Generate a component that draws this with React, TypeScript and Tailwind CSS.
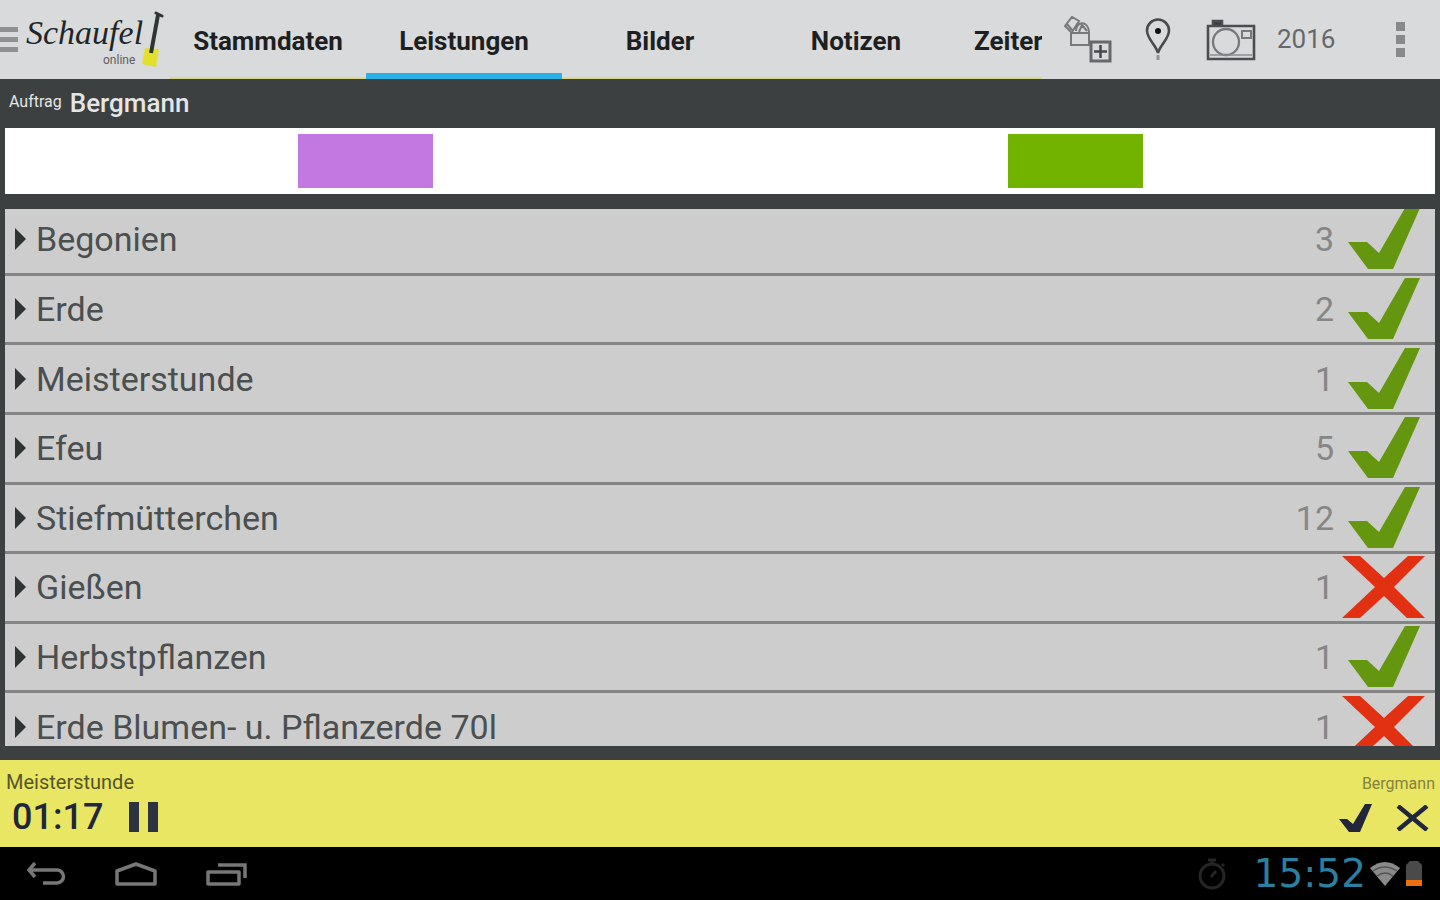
import React, { useState } from 'react';

type Service = {
  name: string;
  amount: number;
  done: boolean;
};

const tabs = ['Stammdaten', 'Leistungen', 'Bilder', 'Notizen', 'Zeiter'];

const services: Service[] = [
  { name: 'Begonien', amount: 3, done: true },
  { name: 'Erde', amount: 2, done: true },
  { name: 'Meisterstunde', amount: 1, done: true },
  { name: 'Efeu', amount: 5, done: true },
  { name: 'Stiefmütterchen', amount: 12, done: true },
  { name: 'Gießen', amount: 1, done: false },
  { name: 'Herbstpflanzen', amount: 1, done: true },
  { name: 'Erde Blumen- u. Pflanzerde 70l', amount: 1, done: false },
];

const Logo: React.FC = () => (
  <svg width="142" height="64" viewBox="0 0 142 64" role="img" aria-label="Schaufel online">
    <text x="4" y="36" fontFamily="Liberation Serif, serif" fontStyle="italic" fontSize="34" fill="#1f2626">
      Schaufel
    </text>
    <text x="81" y="56" fontFamily="Roboto, sans-serif" fontSize="12" fill="#5d6060">
      online
    </text>
    <path d="M123 40l14 1-3 18-14-3z" fill="#e2e02a" />
    <path d="M136 7l-7 38" stroke="#2d3535" strokeWidth="4" fill="none" />
    <path d="M134 5l6 3" stroke="#2d3535" strokeWidth="3" strokeLinecap="round" />
  </svg>
);

const MaterialIcon: React.FC = () => (
  <svg width="48" height="48" viewBox="0 0 48 48" fill="none" stroke="#77797b" strokeWidth="2">
    <path d="M7 17h18v12H7z" />
    <path d="M7 16L1 10l7-9 7 4-7 11M3 8l5 6M12 15c0-10 12-11 13 1M15 16l3-7 5 6" />
    <path d="M27 26h19v19H27z" stroke="#66696b" strokeWidth="3" />
    <path d="M36.500 29v13M30 35.500h13" stroke="#44484a" strokeWidth="2.500" />
  </svg>
);

const PinIcon: React.FC = () => (
  <svg width="26" height="44" viewBox="0 0 26 44" fill="none" stroke="#484b4d" strokeWidth="2.6">
    <path d="M13 35C11 27 2 21 2 12.500a11 11 0 0 1 22 0C24 21 15 27 13 35z" />
    <circle cx="13" cy="13" r="3" fill="#111" stroke="none" />
    <path d="M13 37v5" stroke="#929496" strokeWidth="3" />
  </svg>
);

const CameraIcon: React.FC = () => (
  <svg width="50" height="42" viewBox="0 0 50 42" fill="none" stroke="#4b4e50" strokeWidth="2.600">
    <path d="M2 7h46v33H2z" />
    <path d="M7 6V2h9v4" fill="#3b3e40" />
    <circle cx="20" cy="23" r="13" stroke="#77797b" strokeWidth="2.300" />
    <path d="M36 12h9v7h-9z" stroke="#77797b" strokeWidth="2" />
    <path d="M4 36h42" stroke="#8b8d8f" strokeWidth="1.500" />
  </svg>
);

const DoneIcon: React.FC = () => (
  <svg width="84" height="62" viewBox="0 0 84 62" className="shrink-0" role="img" aria-label="erledigt">
    <path d="M6 34h19l12 11L63 0h15L51 61H26z" fill="#64960f" />
  </svg>
);

const OpenIcon: React.FC = () => (
  <svg width="84" height="62" viewBox="0 0 84 62" className="shrink-0" role="img" aria-label="offen">
    <path d="M0 0h18l24 22L66 0h17L52 31l31 31H65L42 40 18 62H0l33-31z" fill="#e23013" />
  </svg>
);

const ServiceRow: React.FC<{ service: Service }> = ({ service }) => (
  <li className="border-b-[3px] border-[#858585]">
    <button type="button" className="flex h-full w-full items-center pl-[10px] pr-[9px] text-left">
      <svg width="11" height="22" viewBox="0 0 11 22">
        <path d="M0 0l11 11L0 22z" fill="#303333" />
      </svg>
      <span className="ml-[10px] flex-1 text-[34px] leading-10 text-[#4b4f4f]">{service.name}</span>
      <span className="mr-2 text-[34px] leading-10 text-[#868686]">{service.amount}</span>
      {service.done ? <DoneIcon /> : <OpenIcon />}
    </button>
  </li>
);

export default function App() {
  const [activeTab, setActiveTab] = useState('Leistungen');

  return (
    <div className="flex h-screen flex-col overflow-hidden bg-[#3c4041] font-['Roboto',sans-serif]">
      <header className="flex h-[79px] shrink-0 items-stretch bg-[#d9dadc]">
        <div className="flex w-[170px] shrink-0 items-center">
          <button type="button" aria-label="Menü" className="flex w-[18px] flex-col gap-[5px]">
            <span className="h-[5px] bg-[#8e9092]" />
            <span className="h-[5px] bg-[#8e9092]" />
            <span className="h-[5px] bg-[#8e9092]" />
          </button>
          <div className="ml-1">
            <Logo />
          </div>
        </div>

        <nav className="flex flex-1 overflow-hidden">
          {tabs.map((tab) => (
            <button
              key={tab}
              type="button"
              onClick={() => setActiveTab(tab)}
              className="relative w-[196px] shrink-0 pt-1 text-[26px] font-bold text-[#1d1f20] last:w-auto last:flex-1 last:pl-5 last:text-left"
            >
              {tab}
              <span
                className={
                  activeTab === tab
                    ? 'absolute inset-x-0 bottom-0 h-[6px] bg-[#2bb0e6]'
                    : 'absolute inset-x-0 bottom-0 h-[2px] bg-[#d8d886]'
                }
              />
            </button>
          ))}
        </nav>

        <div className="flex w-[398px] shrink-0 items-center pl-[22px] pr-[35px]">
          <button type="button" aria-label="Material hinzufügen">
            <MaterialIcon />
          </button>
          <button type="button" aria-label="Karte" className="ml-[33px]">
            <PinIcon />
          </button>
          <button type="button" aria-label="Kamera" className="ml-[35px]">
            <CameraIcon />
          </button>
          <button type="button" className="ml-[21px] text-[26px] text-[#66696b]">
            2016
          </button>
          <button type="button" aria-label="Weitere Optionen" className="ml-auto flex flex-col gap-1">
            <span className="h-[9px] w-[9px] bg-[#88898b]" />
            <span className="h-[9px] w-[9px] bg-[#88898b]" />
            <span className="h-[9px] w-[9px] bg-[#88898b]" />
          </button>
        </div>
      </header>

      <main className="flex min-h-0 flex-1 flex-col px-[5px]">
        <h1 className="flex h-[49px] shrink-0 items-center gap-2 pl-1 text-[#e4e6e6]">
          <span className="pb-1 text-[16px]">Auftrag</span>
          <span className="text-[26px] font-medium">Bergmann</span>
        </h1>

        <div className="flex h-[66px] shrink-0 items-center justify-around bg-white px-[5px]">
          <div className="h-[54px] w-[135px] bg-[#c377e1]" />
          <div className="h-[54px] w-[135px] bg-[#72b300]" />
        </div>

        <div className="mt-[15px] mb-[14px] min-h-0 flex-1 overflow-hidden bg-[#cdcdcd]">
          <ul className="-mt-[3px] grid h-[557px] auto-rows-fr">
            {services.map((service) => (
              <ServiceRow key={service.name} service={service} />
            ))}
          </ul>
        </div>
      </main>

      <section className="flex h-[87px] shrink-0 justify-between bg-[#e9e663] pt-[10px] text-[#22263a]">
        <div className="pl-[6px]">
          <p className="text-[20px] leading-6 text-[#55552c]">Meisterstunde</p>
          <div className="flex items-center gap-[26px] pl-[6px]">
            <span className="text-[36px] leading-[46px] font-medium">01:17</span>
            <button type="button" aria-label="Pause" className="flex gap-[9px]">
              <span className="h-[30px] w-[10px] bg-[#2b3440]" />
              <span className="h-[30px] w-[10px] bg-[#2b3440]" />
            </button>
          </div>
        </div>
        <div className="flex flex-col items-end pr-[5px]">
          <p className="text-[16px] leading-7 text-[#85823e]">Bergmann</p>
          <div className="flex items-center gap-6 pt-[5px] pr-[6px]">
            <button type="button" aria-label="Fertig">
              <svg width="33" height="30" viewBox="0 0 33 30">
                <path d="M0 16h8l6 5L26 1h7L21 29H10z" fill="#22263a" />
              </svg>
            </button>
            <button type="button" aria-label="Abbrechen">
              <svg width="33" height="26" viewBox="0 0 33 26">
                <path d="M2 1l29 24M31 1L2 25" stroke="#22263a" strokeWidth="4.500" />
              </svg>
            </button>
          </div>
        </div>
      </section>

      <footer className="flex h-[53px] shrink-0 items-center bg-black pr-[18px] pl-[26px]">
        <button type="button" aria-label="Zurück">
          <svg width="40" height="24" viewBox="0 0 40 24" fill="none" stroke="#777" strokeWidth="3.500">
            <path d="M9 1L3 8l6 7M3 8h28a6 6 0 0 1 0 13H17" />
          </svg>
        </button>
        <button type="button" aria-label="Startseite" className="ml-12">
          <svg width="44" height="24" viewBox="0 0 44 24" fill="none" stroke="#777" strokeWidth="3.500">
            <path d="M3 22V9l19-7 19 7v13z" strokeLinejoin="round" />
          </svg>
        </button>
        <button type="button" aria-label="Letzte Apps" className="ml-12">
          <svg width="42" height="24" viewBox="0 0 42 24" fill="none" stroke="#777" strokeWidth="3.500">
            <path d="M2 10h31v12H2z" strokeLinejoin="round" />
            <path d="M12 3h27v13" />
          </svg>
        </button>

        <div className="ml-auto flex items-center">
          <svg width="28" height="32" viewBox="0 0 28 32" fill="none" stroke="#252525" strokeWidth="3">
            <circle cx="14" cy="18" r="12" />
            <path d="M10 2h8M14 2v4M24 6l2 2M13 19l5-6" />
          </svg>
          <span className="ml-7 font-['DejaVu_Sans',sans-serif] text-[39px] leading-none text-[#2d7f9f]">15:52</span>
          <svg width="30" height="24" viewBox="0 0 30 24" className="ml-1">
            <path d="M0 6Q15-6 30 6L15 24z" fill="#8a8a8a" />
            <path d="M3 9q12-8 24 0M7 14q8-6 16 0" fill="none" stroke="#555" strokeWidth="1.500" />
          </svg>
          <svg width="16" height="25" viewBox="0 0 16 25" className="ml-1.5">
            <path d="M4 0h8l4 4v16H0V4z" fill="#4a4a4a" />
            <path d="M0 19h16v6H0z" fill="#f0700f" />
          </svg>
        </div>
      </footer>
    </div>
  );
}
